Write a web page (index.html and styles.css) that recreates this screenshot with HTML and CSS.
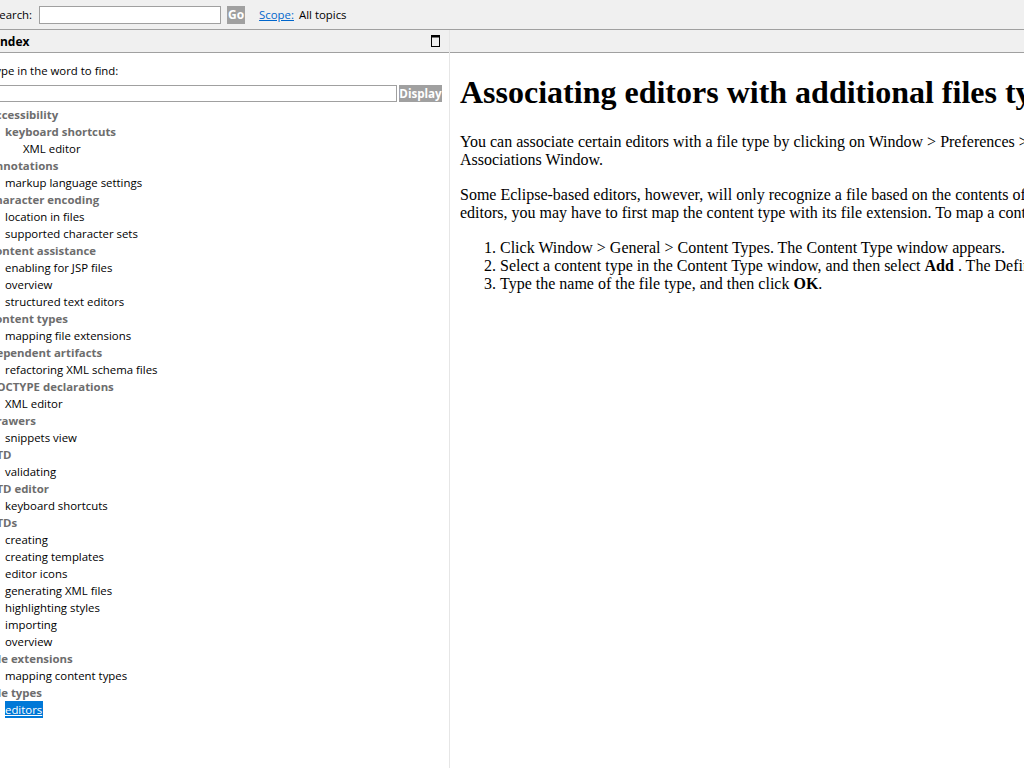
FILE: index.html
```html
<!DOCTYPE html>
<html>
<head>
<meta charset="utf-8">
<title>Help - Index</title>
<link rel="stylesheet" href="styles.css">
</head>
<body>
<div class="app">
  <header class="searchbar">
    <label class="search-label" for="q">Search:</label>
    <input id="q" class="search-input" type="text">
    <span class="btn go-btn">Go</span>
    <a class="scope-link" href="#">Scope:</a>
    <span class="scope-value">All topics</span>
  </header>
  <div class="main">
    <aside class="index-pane">
      <div class="pane-title">
        <span class="pane-title-text">Index</span>
        <svg class="max-icon" width="9" height="12" viewBox="0 0 9 12">
          <rect x="0.5" y="0.5" width="8" height="11" fill="none" stroke="#000" stroke-width="1"/>
          <rect x="0.5" y="0.5" width="8" height="2" fill="#000"/>
        </svg>
      </div>
      <div class="index-body">
        <div class="find-label">Type in the word to find:</div>
        <div class="find-row">
          <input class="find-input" type="text">
          <span class="btn display-btn">Display</span>
        </div>
        <ul class="tree">
          <li class="grp l0">Accessibility</li>
          <li class="grp l1">keyboard shortcuts</li>
          <li class="leaf l2">XML editor</li>
          <li class="grp l0">Annotations</li>
          <li class="leaf l1">markup language settings</li>
          <li class="grp l0">Character encoding</li>
          <li class="leaf l1">location in files</li>
          <li class="leaf l1">supported character sets</li>
          <li class="grp l0">Content assistance</li>
          <li class="leaf l1">enabling for JSP files</li>
          <li class="leaf l1">overview</li>
          <li class="leaf l1">structured text editors</li>
          <li class="grp l0">Content types</li>
          <li class="leaf l1">mapping file extensions</li>
          <li class="grp l0">Dependent artifacts</li>
          <li class="leaf l1">refactoring XML schema files</li>
          <li class="grp l0">DOCTYPE declarations</li>
          <li class="leaf l1">XML editor</li>
          <li class="grp l0">Drawers</li>
          <li class="leaf l1">snippets view</li>
          <li class="grp l0">DTD</li>
          <li class="leaf l1">validating</li>
          <li class="grp l0">DTD editor</li>
          <li class="leaf l1">keyboard shortcuts</li>
          <li class="grp l0">DTDs</li>
          <li class="leaf l1">creating</li>
          <li class="leaf l1">creating templates</li>
          <li class="leaf l1">editor icons</li>
          <li class="leaf l1">generating XML files</li>
          <li class="leaf l1">highlighting styles</li>
          <li class="leaf l1">importing</li>
          <li class="leaf l1">overview</li>
          <li class="grp l0">File extensions</li>
          <li class="leaf l1">mapping content types</li>
          <li class="grp l0">File types</li>
          <li class="leaf l1"><span class="selected">editors</span></li>
        </ul>
      </div>
    </aside>
    <section class="content-pane">
      <div class="pane-title"></div>
      <article class="doc">
        <h1>Associating editors with additional files types</h1>
        <p>You can associate certain editors with a file type by clicking on Window &gt; Preferences &gt; General &gt; Editors &gt; File Associations. The editor will then be listed in the File<br>Associations Window.</p>
        <p>Some Eclipse-based editors, however, will only recognize a file based on the contents of the file. For example, to associate a file with one of these<br>editors, you may have to first map the content type with its file extension. To map a content type to a file extension, complete the following steps:</p>
        <ol>
          <li>Click Window &gt; General &gt; Content Types. The Content Type window appears.</li>
          <li>Select a content type in the Content Type window, and then select <b>Add</b> . The Define a New File Type window appears.</li>
          <li>Type the name of the file type, and then click <b>OK</b>.</li>
        </ol>
      </article>
    </section>
  </div>
</div>
</body>
</html>
```

FILE: styles.css
```css
html, body {
  margin: 0;
  padding: 0;
  height: 100%;
  overflow: hidden;
  background: #fff;
}

.app {
  display: flex;
  flex-direction: column;
  height: 768px;
  font-family: "Open Sans", "Noto Sans", sans-serif;
  font-size: 11.4px;
  color: #000;
}

/* ---------- top search bar ---------- */
.searchbar {
  height: 29px;
  background: #f0f0f0;
  border-bottom: 1px solid #a0a0a0;
  display: flex;
  align-items: center;
  margin-left: -7px;
}
.search-label {
  margin-right: 7px;
}
.search-input {
  width: 182px;
  height: 18px;
  box-sizing: border-box;
  border: 1px solid #a0a0a0;
  background: #fff;
  padding: 0;
  margin: 0 6px 0 0;
}
.btn {
  background: #a0a0a0;
  color: #fff;
  font-weight: bold;
  display: inline-flex;
  align-items: center;
  justify-content: center;
  box-sizing: border-box;
}
.go-btn {
  width: 18px;
  height: 18px;
  margin-right: 14px;
  font-size: 12px;
}
.scope-link {
  color: #0066cc;
  text-decoration: underline;
  margin-right: 5px;
}

/* ---------- main ---------- */
.main {
  flex: 1;
  display: flex;
  min-height: 0;
}
.pane-title {
  height: 22px;
  background: #f0f0f0;
  border-bottom: 1px solid #a0a0a0;
  display: flex;
  align-items: center;
  justify-content: space-between;
  flex: none;
}
.index-pane {
  width: 449px;
  flex: none;
  display: flex;
  flex-direction: column;
  border-right: 1px solid #e6e6e6;
  overflow: hidden;
}
.index-pane .pane-title {
  border-right: 1px solid #a0a0a0;
  margin-right: -1px;
}
.pane-title-text {
  font-weight: bold;
  margin-left: -4px;
  font-size: 12px;
}
.max-icon {
  margin-right: 9px;
}

.index-body {
  padding: 9px 7px 0 0;
}
.find-label {
  margin-left: -11px;
  line-height: 17px;
}
.find-row {
  display: flex;
  margin-top: 6px;
  margin-left: -20px;
  height: 17px;
}
.find-input {
  flex: 1;
  height: 17px;
  box-sizing: border-box;
  border: 1px solid #a0a0a0;
  padding: 0;
  margin: 0 2px 0 0;
}
.display-btn {
  width: 43px;
  height: 17px;
  font-size: 11.6px;
}

.tree {
  list-style: none;
  margin: 4px 0 0 0;
  padding: 0;
}
.tree li {
  line-height: 17px;
  height: 17px;
  white-space: nowrap;
}
.tree .grp {
  font-weight: bold;
  color: #6d6d6d;
}
.tree .l0 { padding-left: 0; margin-left: -12px; }
.tree .l1 { padding-left: 5px; }
.tree .l2 { padding-left: 23px; }
.selected {
  background: #0078d7;
  color: #fff;
  text-decoration: underline;
  padding: 1px 1px 1px 0;
}

/* ---------- content pane ---------- */
.content-pane {
  flex: 1;
  display: flex;
  flex-direction: column;
  min-width: 0;
  overflow: hidden;
}
.doc {
  padding: 0 0 0 10px;
  font-family: "Liberation Serif", "Times New Roman", serif;
  font-size: 16px;
  white-space: nowrap;
}
.doc h1 {
  font-size: 32px;
  margin: 21.44px 0 21.44px;
}
.doc p {
  margin: 17px 0;
}
.doc ol {
  margin: 17px 0;
  padding-left: 40px;
}
```
